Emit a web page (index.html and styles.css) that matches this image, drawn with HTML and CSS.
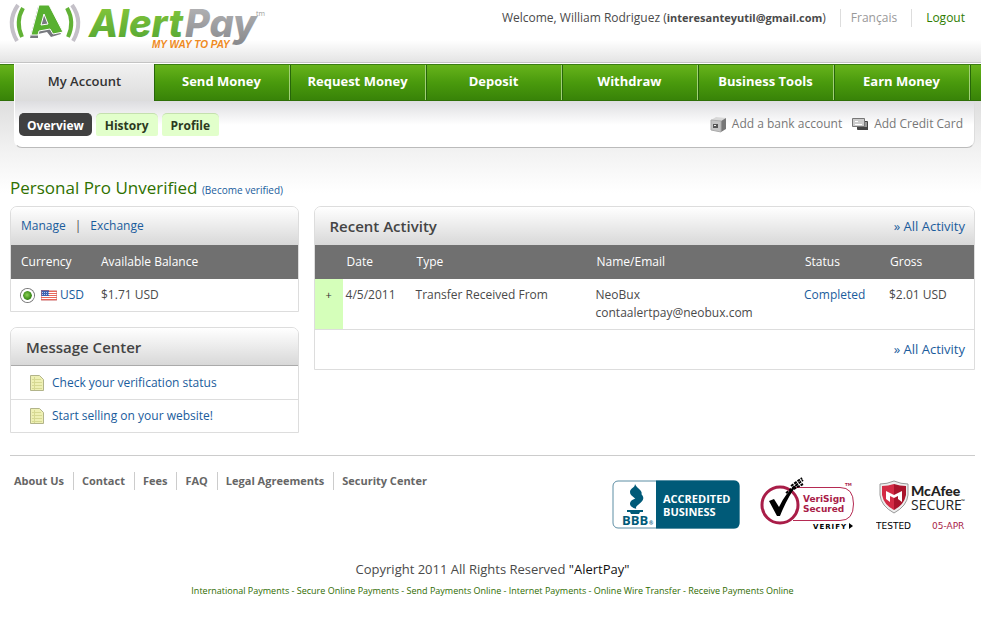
FILE: index.html
```html
<!DOCTYPE html>
<html lang="en">
<head>
    <meta charset="UTF-8">
    <meta name="viewport" content="width=device-width, initial-scale=1.0">
    <title>AlertPay - My Account</title>
    <link rel="stylesheet" href="styles.css">
</head>
<body>
    <header class="header">
        <a class="logo" href="#" aria-label="AlertPay">
            <svg width="270" height="54" viewBox="0 0 270 54">
                <defs>
                    <linearGradient id="green" x1="0" y1="0" x2="0" y2="1">
                        <stop offset="0" stop-color="#8ccb3c"/>
                        <stop offset="1" stop-color="#4fa333"/>
                    </linearGradient>
                    <linearGradient id="grey" x1="0" y1="0" x2="0" y2="1">
                        <stop offset="0" stop-color="#b9b9bb"/>
                        <stop offset="1" stop-color="#87888b"/>
                    </linearGradient>
                </defs>
                <path d="M18 5Q6 22 17 41M72 5Q84 22 73 41" fill="none" stroke="#c4c0c8" stroke-width="4"/>
                <path d="M23 8Q15 22 22 37M67 8Q75 22 68 37" fill="none" stroke="#62b236" stroke-width="4"/>
                <path fill="#77797e" d="M38 7L47 8L61 34L51 37L47 32L38 34L38 38L30 38Z"/>
                <path fill="#58b030" stroke="#fff" fill-rule="evenodd" d="M39 5H49L63 32L53 34L50 29L39 31L38 35L31 35ZM44 14L41 25L48 24Z"/>
                <text class="logo-alert" x="89" y="37">Alert</text>
                <text class="logo-pay" x="185" y="37">Pay</text>
                <text class="logo-slogan" x="152" y="48">MY WAY TO PAY</text>
                <text class="logo-tm" x="256" y="16">tm</text>
            </svg>
        </a>
        <ul class="user-links">
            <li>Welcome, William Rodriguez (<strong>interesanteyutil@gmail.com</strong>)</li>
            <li><a class="language" href="#">Français</a></li>
            <li><a class="logout" href="#">Logout</a></li>
        </ul>
    </header>

    <nav class="main-nav">
        <a class="active" href="#">My Account</a>
        <a href="#">Send Money</a>
        <a href="#">Request Money</a>
        <a href="#">Deposit</a>
        <a href="#">Withdraw</a>
        <a href="#">Business Tools</a>
        <a href="#">Earn Money</a>
    </nav>

    <div class="page">
        <div class="sub-nav">
            <div class="tabs">
                <a class="tab current" href="#">Overview</a>
                <a class="tab" href="#">History</a>
                <a class="tab" href="#">Profile</a>
            </div>
            <div class="shortcuts">
                <a href="#">
                    <svg width="17" height="17" viewBox="0 0 17 17">
                        <path d="M1 4L6 1L16 2L11 5Z" fill="#d8d8d8"/>
                        <path d="M11 5L16 2V13L11 16Z" fill="#777"/>
                        <path d="M1 4L11 5V16L1 14Z" fill="#c4c4c4" stroke="#aaa"/>
                        <path d="M3 8H8V12H3Z" fill="#555"/>
                        <path d="M4 9H6V10H4Z" fill="#eee"/>
                    </svg>
                    Add a bank account
                </a>
                <a href="#">
                    <svg width="17" height="17" viewBox="0 0 17 17">
                        <path d="M5.500 5.500H15.500V13.500H5.500Z" fill="#999" stroke="#444"/>
                        <path d="M6 11H16V14H6Z" fill="#444"/>
                        <path d="M.5 2.500H12.500V10.500H.5Z" fill="#ccc" stroke="#777"/>
                        <path d="M3 5.500H6M3 8.500H10" stroke="#fff"/>
                    </svg>
                    Add Credit Card
                </a>
            </div>
        </div>

        <main class="content">
            <h1>Personal Pro Unverified <a href="#">(Become verified)</a></h1>

            <div class="columns">
                <div class="side">
                    <section class="panel">
                        <div class="panel-head links">
                            <a href="#">Manage</a><span>|</span><a href="#">Exchange</a>
                        </div>
                        <table class="balance">
                            <thead>
                                <tr>
                                    <th>Currency</th>
                                    <th>Available Balance</th>
                                </tr>
                            </thead>
                            <tbody>
                                <tr>
                                    <td>
                                        <label class="currency">
                                            <input type="radio" name="currency" value="USD" checked>
                                            <svg width="16" height="11" viewBox="0 0 16 11">
                                                <path d="M0 0H16V11H0Z" fill="#fff"/>
                                                <path d="M0 1.500H16M0 3.500H16M0 5.500H16M0 7.500H16M0 9.500H16" stroke="#e8665a"/>
                                                <path d="M0 0H8V6H0Z" fill="#3d62b0"/>
                                                <path d="M1 2.500H8M1 4.500H8" stroke="#b9c8ec" stroke-dasharray="1 1"/>
                                                <path d="M.5 .5H15.500V10.500H.5Z" fill="none" stroke="#c66" stroke-opacity=".5"/>
                                            </svg>
                                            <span>USD</span>
                                        </label>
                                    </td>
                                    <td>$1.71 USD</td>
                                </tr>
                            </tbody>
                        </table>
                    </section>

                    <section class="panel">
                        <div class="panel-head ruled">
                            <h2>Message Center</h2>
                        </div>
                        <ul class="messages">
                            <li>
                                <svg width="14" height="16" viewBox="0 0 14 16">
                                    <path d="M.5 .5H9.500L13.500 4.500V15.500H.5Z" fill="#eef0b4" stroke="#b2b48a"/>
                                    <path d="M2 4.500H11M2 7.500H12M2 10.500H12M2 13.500H12M4.500 2V15" stroke="#d6d992"/>
                                </svg>
                                <a href="#">Check your verification status</a>
                            </li>
                            <li>
                                <svg width="14" height="16" viewBox="0 0 14 16">
                                    <path d="M.5 .5H9.500L13.500 4.500V15.500H.5Z" fill="#eef0b4" stroke="#b2b48a"/>
                                    <path d="M2 4.500H11M2 7.500H12M2 10.500H12M2 13.500H12M4.500 2V15" stroke="#d6d992"/>
                                </svg>
                                <a href="#">Start selling on your website!</a>
                            </li>
                        </ul>
                    </section>
                </div>

                <section class="panel recent">
                    <div class="panel-head">
                        <h2>Recent Activity</h2>
                        <a class="all-activity" href="#">» All Activity</a>
                    </div>
                    <table class="activity">
                        <thead>
                            <tr>
                                <th class="col-more"></th>
                                <th class="col-date">Date</th>
                                <th class="col-type">Type</th>
                                <th>Name/Email</th>
                                <th class="col-status">Status</th>
                                <th class="col-gross">Gross</th>
                            </tr>
                        </thead>
                        <tbody>
                            <tr>
                                <td class="more"><button type="button" aria-label="Show details">+</button></td>
                                <td>4/5/2011</td>
                                <td>Transfer Received From</td>
                                <td>NeoBux<br>contaalertpay@neobux.com</td>
                                <td><a href="#">Completed</a></td>
                                <td>$2.01 USD</td>
                            </tr>
                        </tbody>
                    </table>
                    <div class="panel-foot"><a class="all-activity" href="#">» All Activity</a></div>
                </section>
            </div>
        </main>

        <footer class="footer">
            <div class="footer-top">
                <ul class="footer-links">
                    <li><a href="#">About Us</a></li>
                    <li><a href="#">Contact</a></li>
                    <li><a href="#">Fees</a></li>
                    <li><a href="#">FAQ</a></li>
                    <li><a href="#">Legal Agreements</a></li>
                    <li><a href="#">Security Center</a></li>
                </ul>
                <div class="seals">
                    <a href="#" aria-label="BBB Accredited Business">
                        <svg class="seal-bbb" width="128" height="56" viewBox="0 0 128 56">
                            <rect x="1" y="4" width="126" height="47" rx="5" fill="#fff" stroke="#5d8ea4"/>
                            <path d="M44 3.500H122Q127.500 3.500 127.500 9V46Q127.500 51.500 122 51.500H44Z" fill="#005a78"/>
                            <path fill="#005a78" d="M23 7C25 12 32 13 29 19C28 21 25 23 24 25C25 20 18 20 18 15C18 11 23 11 23 7Z"/>
                            <path fill="#005a78" d="M29 17C34 21 30 25 26 28C23 30 24 32 25 32C20 31 16 28 19 24C22 21 29 21 29 17Z"/>
                            <path fill="#005a78" d="M15 33H31V35H28L27 37H19L18 35H15Z"/>
                            <text class="bbb-name" x="10" y="48">BBB</text>
                            <text class="bbb-mark" x="37" y="48">®</text>
                            <text class="bbb-text" x="51" y="26">ACCREDITED</text>
                            <text class="bbb-text" x="51" y="39">BUSINESS</text>
                        </svg>
                    </a>
                    <a href="#" aria-label="VeriSign Secured">
                        <svg class="seal-verisign" width="96" height="56" viewBox="0 0 96 56">
                            <path d="M33 10.500H80Q93.500 10.500 93.500 27T80 43.500H33" fill="#fff" stroke="#b52a52" stroke-width="1"/>
                            <circle cx="20" cy="28" r="18" fill="#fff" stroke="#a91d48" stroke-width="3"/>
                            <path d="M9 24L14 22L19 30Q26 15 38 6Q27 21 20 39H17Z" fill="#000"/>
                            <path d="M26 16L43 3M30 14L43 7M31 9L42 1" stroke="#000" stroke-width="2" stroke-dasharray="3 1"/>
                            <text class="vs-text" x="43" y="25">VeriSign</text>
                            <text class="vs-text" x="43" y="35">Secured</text>
                            <text class="vs-tm" x="85" y="9">TM</text>
                            <text class="vs-verify" x="53" y="52">VERIFY</text>
                            <path d="M89 46L93 49L89 52Z" fill="#000"/>
                        </svg>
                    </a>
                    <a href="#" aria-label="McAfee Secure, tested 05-APR">
                        <svg class="seal-mcafee" width="90" height="56" viewBox="0 0 90 56">
                            <path d="M4 7Q11 7 18 4Q25 7 32 7V18Q31 29 18 36Q5 29 4 18Z" fill="#eee" stroke="#999"/>
                            <path d="M6 9Q12 9 18 7V33Q8 28 6 18Z" fill="#d32b45"/>
                            <path d="M18 7Q24 9 30 9V18Q28 28 18 33Z" fill="#a9142c"/>
                            <path d="M10 14L18 18L26 14V25L22 22V19L18 21L14 19V25L10 22Z" fill="#fff"/>
                            <text class="mc-name" x="35" y="19">McAfee</text>
                            <text class="mc-secure" x="35" y="33">SECURE</text>
                            <text class="mc-dot" x="85" y="26">™</text>
                            <text class="mc-tested" x="0" y="52">TESTED</text>
                            <text class="mc-date" x="56" y="52">05-APR</text>
                        </svg>
                    </a>
                </div>
            </div>
            <p class="copyright">Copyright 2011 All Rights Reserved <span>"AlertPay"</span></p>
            <p class="keywords">
                <a href="#">International Payments</a> - <a href="#">Secure Online Payments</a> -
                <a href="#">Send Payments Online</a> - <a href="#">Internet Payments</a> -
                <a href="#">Online Wire Transfer</a> - <a href="#">Receive Payments Online</a>
            </p>
        </footer>
    </div>
</body>
</html>
```

FILE: styles.css
```css
* {
    box-sizing: border-box;
}
body {
    margin: 0;
    font-family: "Trebuchet MS", "Open Sans", sans-serif;
    font-size: 12px;
    line-height: 18px;
    color: #4a4a4a;
    background: #fff;
}
a {
    color: #1a5c9c;
    text-decoration: none;
}
h1, h2, p, ul {
    margin: 0;
    padding: 0;
    font-weight: normal;
}
ul {
    list-style: none;
}
svg {
    display: block;
    flex: none;
}

/* header */
.header {
    display: flex;
    justify-content: space-between;
    align-items: flex-start;
    height: 63px;
    padding: 0 8px 0 0;
    background: linear-gradient(#fff 40px, #e4e4e4 62px);
    border-bottom: 1px solid #c4c4c4;
}
.logo-alert, .logo-pay {
    font-family: Inter, "Liberation Sans", sans-serif;
    font-size: 38px;
    font-weight: 800;
    font-style: italic;
}
.logo-alert {
    fill: url(#green);
}
.logo-pay {
    fill: url(#grey);
}
.logo-slogan {
    font-family: "Liberation Sans", Arial, sans-serif;
    font-size: 10px;
    font-weight: bold;
    font-style: italic;
    fill: #ef8a22;
}
.logo-tm {
    font-size: 7px;
    fill: #999;
}
.user-links {
    display: flex;
    padding-top: 9px;
}
.user-links strong {
    font-size: 11px;
}
.user-links li + li {
    margin-left: 14px;
    padding-left: 10px;
    border-left: 1px solid #ddd;
}
.user-links li:last-child {
    padding: 0 8px 0 14px;
}
.user-links .language {
    color: #999;
}
.user-links .logout {
    color: #2f7d00;
}

/* main navigation */
.main-nav {
    display: grid;
    grid-template-columns: 140px repeat(6, 1fr);
    height: 37px;
    padding: 0 11px 0 14px;
    background: linear-gradient(#67b31b, #4a9a0d 50%, #388308);
    border-top: 1px solid #3b7d12;
    border-bottom: 1px solid #2f6f08;
    margin-top: 1px;
}
.main-nav a {
    line-height: 33px;
    text-align: center;
    font-size: 13px;
    font-weight: bold;
    color: #fff;
    border-right: 1px solid #a2d078;
    box-shadow: 1px 0 #27660a;
}
.main-nav .active {
    margin: -1px 0;
    padding-top: 1px;
    color: #333;
    font-weight: 600;
    background: linear-gradient(#f1f1f1, #dcdcdc);
    border: 0;
    border-left: 1px solid #fff;
}

/* tabs under the navigation */
.page {
    padding: 0 6px 0 10px;
    background: linear-gradient(#dedede, #f2f2f2 50px, #fff 92px) no-repeat;
}
.sub-nav {
    display: flex;
    justify-content: space-between;
    height: 47px;
    margin-left: 4px;
    padding: 12px 11px 0 4px;
    background: linear-gradient(#dddde0, #fff 24px);
    border: 1px solid #bbb;
    border-top: 0;
    border-left-color: #fff;
    border-right-color: #ddd;
    border-radius: 0 0 8px 8px;
}
.tabs, .shortcuts, .shortcuts a {
    display: flex;
}
.tabs {
    gap: 4px;
}
.tab {
    height: 23px;
    padding: 0 9px;
    line-height: 23px;
    font-weight: bold;
    color: #2c3a1e;
    background: #e2ffcb;
    border-top: 1px solid #c4e0ae;
    border-radius: 5px 5px 2px 2px;
}
.tab.current {
    padding: 0 8px;
    color: #fff;
    background: #404040;
    border-color: #404040;
    border-radius: 5px;
}
.shortcuts {
    gap: 10px;
    padding-top: 2px;
}
.shortcuts a {
    gap: 5px;
    color: #777;
}
.shortcuts svg {
    margin-top: 1px;
}

/* content */
h1 {
    padding: 29px 0 7px;
    font-size: 17px;
    font-weight: 500;
    line-height: 22px;
    color: #2f7000;
}
h1 a {
    font-size: 10px;
    font-weight: normal;
    line-height: 12px;
}
h2 {
    font-size: 15px;
    font-weight: 600;
    color: #444;
}
.columns {
    display: flex;
    align-items: flex-start;
    gap: 15px;
}
.side {
    flex: 0 0 29.9%;
}
.panel {
    border: 1px solid #ddd;
    border-radius: 7px 7px 0 0;
    overflow: hidden;
}
.panel + .panel {
    margin-top: 15px;
}
.recent {
    flex: 1;
}
.panel-head {
    display: flex;
    justify-content: space-between;
    align-items: center;
    height: 38px;
    padding: 0 9px 0 15px;
    background: linear-gradient(#fff, #d8d8d8);
}
.panel-head.links {
    justify-content: flex-start;
    gap: 9px;
    padding-left: 10px;
}
.panel-head.ruled {
    border-bottom: 1px solid #aaa;
}
.all-activity {
    font-size: 13px;
}
table {
    width: 100%;
    border-collapse: collapse;
    table-layout: fixed;
}
th {
    height: 34px;
    padding: 0;
    text-align: left;
    font-weight: normal;
    color: #fff;
    background: #707070;
}
td {
    padding: 0;
    vertical-align: top;
}
.balance th, .balance td {
    height: 32px;
    padding-left: 10px;
    vertical-align: middle;
}
.balance th {
    height: 34px;
}
.balance th:first-child {
    width: 80px;
}
.currency {
    display: flex;
    align-items: center;
    gap: 3px;
    color: #1a5c9c;
}
.currency input {
    appearance: none;
    width: 13px;
    height: 13px;
    margin: 0 4px 0 0;
    flex: none;
    border: 2px solid #fff;
    border-radius: 50%;
    background: radial-gradient(circle at 4px 4px, #8ed356, #2b7c0c 5px) padding-box;
    box-shadow: 0 0 0 1px #777;
}
.messages li {
    display: flex;
    align-items: center;
    gap: 8px;
    height: 33px;
    padding-left: 19px;
}
.messages li + li {
    border-top: 1px solid #ddd;
}
.activity tr {
    border-bottom: 1px solid #ddd;
}
.activity thead tr {
    border: 0;
}
.activity th {
    padding-left: 4px;
}
.activity td {
    height: 50px;
    padding: 7px 0 6px 3px;
}
.col-more {
    width: 28px;
}
.col-date {
    width: 70px;
}
.col-type {
    width: 180px;
}
.col-status {
    width: 85px;
}
.col-gross {
    width: 88px;
}
.activity .more {
    padding-left: 0;
    background: #d5ffba;
}
.more button {
    width: 100%;
    padding: 0;
    font: inherit;
    font-size: 11px;
    color: #333;
    background: none;
    border: 0;
}
.panel-foot {
    padding: 10px 9px;
    text-align: right;
}

/* footer */
.footer {
    margin-top: 22px;
    border-top: 1px solid #ccc;
}
.footer-top {
    display: flex;
    justify-content: space-between;
    align-items: flex-start;
}
.footer-links {
    display: flex;
    padding: 16px 0 0 4px;
}
.footer-links li + li {
    margin-left: 9px;
    padding-left: 8px;
    border-left: 1px solid #ccc;
}
.footer-links a {
    font-size: 11px;
    font-weight: bold;
    color: #666;
}
.seals {
    display: flex;
    gap: 20px;
    padding: 21px 9px 0 0;
}
.seal-bbb text {
    font-family: "Open Sans", sans-serif;
    font-weight: bold;
    fill: #fff;
}
.seal-bbb .bbb-text {
    font-size: 11px;
}
.seal-bbb .bbb-name {
    font-size: 13px;
    fill: #005a78;
}
.seal-bbb .bbb-mark {
    font-size: 5px;
    fill: #005a78;
}
.seal-verisign text {
    font-family: "DejaVu Sans", sans-serif;
    font-weight: bold;
    fill: #a91d48;
}
.seal-verisign .vs-text {
    font-size: 9px;
}
.seal-verisign .vs-tm {
    font-size: 4px;
}
.seal-verisign .vs-verify {
    font-size: 7px;
    letter-spacing: 1px;
    fill: #000;
}
.mc-name {
    font-family: Lato, sans-serif;
    font-size: 14px;
    font-weight: 900;
    fill: #222;
}
.mc-secure {
    font-family: "Open Sans", sans-serif;
    font-size: 14px;
    fill: #222;
}
.mc-dot {
    font-size: 5px;
}
.mc-tested, .mc-date {
    font-family: "DejaVu Sans", sans-serif;
    font-size: 9px;
    fill: #000;
}
.mc-date {
    fill: #a91d48;
}
.copyright, .keywords {
    text-align: center;
}
.copyright {
    padding-top: 27px;
    font-size: 13px;
}
.copyright span {
    color: #111;
}
.keywords {
    padding-top: 4px;
    font-size: 9px;
    color: #2f6b00;
}
.keywords a {
    color: #2f6b00;
}
```
